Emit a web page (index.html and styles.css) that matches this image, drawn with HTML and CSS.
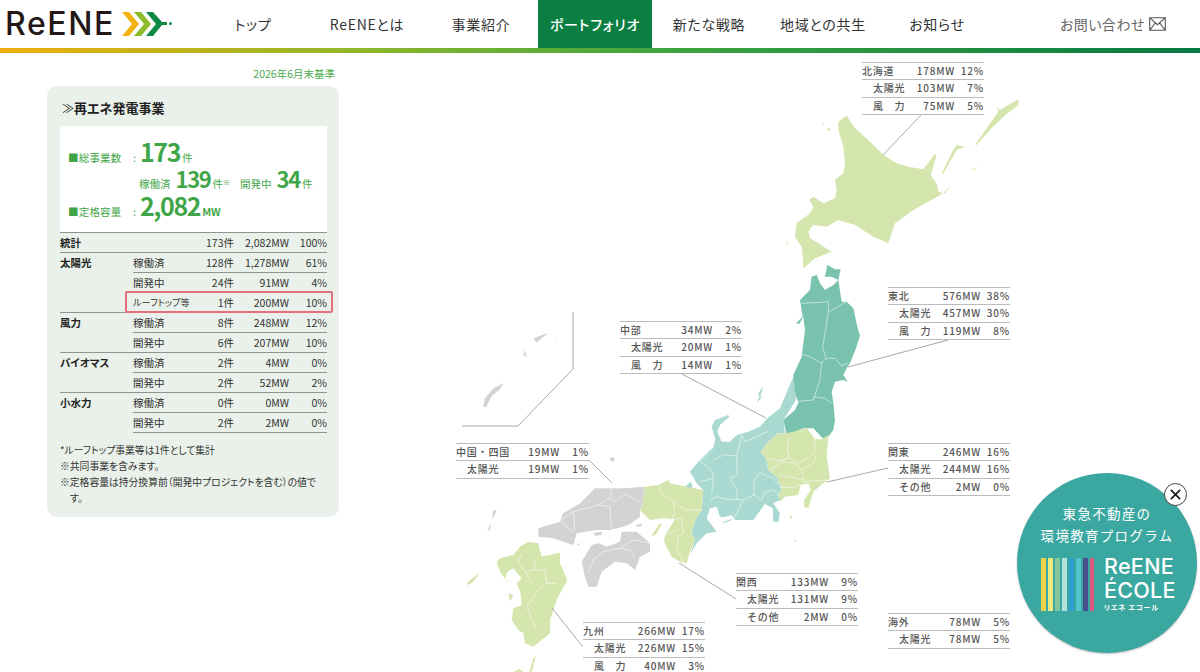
FILE: index.html
```html
<!DOCTYPE html>
<html lang="ja">
<head>
    <meta charset="UTF-8">
    <meta name="viewport" content="width=device-width, initial-scale=1.0">
    <title>ポートフォリオ | ReENE</title>
    <link rel="stylesheet" href="styles.css">
</head>
<body>
    <header class="site-header">
        <a class="logo" href="#">
            <span class="logo-text">ReENE</span>
            <svg class="logo-arrows" viewBox="0 0 50 26" width="50" height="26" aria-hidden="true">
                <path d="M0 1h7l10 12L7 25H0l10-12z" fill="#f0b310"/>
                <path d="M12 1h7l10 12-10 12h-7l10-12z" fill="#8dbb2c"/>
                <path d="M24 1h7l9 10h5v3h-5l-9 11h-7l10-12z" fill="#0f8a45"/>
                <circle cx="48.500" cy="12.500" r="1.500" fill="#0f8a45"/>
            </svg>
        </a>
        <nav class="main-nav">
            <a href="#">トップ</a>
            <a href="#">ReENEとは</a>
            <a href="#">事業紹介</a>
            <a href="#" class="active">ポートフォリオ</a>
            <a href="#">新たな戦略</a>
            <a href="#">地域との共生</a>
            <a href="#">お知らせ</a>
        </nav>
        <a class="contact" href="#">
            お問い合わせ
            <svg viewBox="0 0 17 14" width="17" height="14" aria-hidden="true">
                <path d="M.7.7h15.600v12.600H.7zM.7.7l7.800 7 7.800-7M.7 13.300l5.500-7.300M16.300 13.300l-5.500-7.300" fill="none" stroke="#555" stroke-width="1.100"/>
            </svg>
        </a>
    </header>
    <div class="header-bar"></div>

    <main class="content">
        <section class="summary">
            <p class="as-of">2026年6月末基準</p>
            <div class="panel">
                <h2 class="panel-title"><span class="panel-mark">≫</span>再エネ発電事業</h2>
                <div class="totals">
                    <div class="totals-row totals-first">
                        <span class="totals-label">■総事業数</span><span class="colon">:</span>
                        <b class="num-l">173</b><span class="unit">件</span>
                    </div>
                    <div class="totals-row totals-sub">
                        <span>稼働済</span><b class="num-m">139</b><span class="unit">件<small>※</small></span>
                        <span class="totals-gap">開発中</span><b class="num-m">34</b><span class="unit">件</span>
                    </div>
                    <div class="totals-row totals-last">
                        <span class="totals-label">■定格容量</span><span class="colon">:</span>
                        <b class="num-xl">2,082</b><span class="unit unit-mw">MW</span>
                    </div>
                </div>
                <div class="table-wrap">
                    <table class="stats">
                        <colgroup>
                            <col class="col-type"><col class="col-state"><col class="col-count"><col class="col-mw"><col class="col-pct">
                        </colgroup>
                        <tr><th>統計</th><td></td><td class="r">173件</td><td class="r">2,082MW</td><td class="r">100%</td></tr>
                        <tr><th rowspan="3">太陽光</th><td>稼働済</td><td class="r">128件</td><td class="r">1,278MW</td><td class="r">61%</td></tr>
                        <tr><td>開発中</td><td class="r">24件</td><td class="r">91MW</td><td class="r">4%</td></tr>
                        <tr><td class="narrow">ルーフトップ等</td><td class="r">1件</td><td class="r">200MW</td><td class="r">10%</td></tr>
                        <tr><th rowspan="2">風力</th><td>稼働済</td><td class="r">8件</td><td class="r">248MW</td><td class="r">12%</td></tr>
                        <tr><td>開発中</td><td class="r">6件</td><td class="r">207MW</td><td class="r">10%</td></tr>
                        <tr><th rowspan="2">バイオマス</th><td>稼働済</td><td class="r">2件</td><td class="r">4MW</td><td class="r">0%</td></tr>
                        <tr><td>開発中</td><td class="r">2件</td><td class="r">52MW</td><td class="r">2%</td></tr>
                        <tr><th rowspan="2">小水力</th><td>稼働済</td><td class="r">0件</td><td class="r">0MW</td><td class="r">0%</td></tr>
                        <tr><td>開発中</td><td class="r">2件</td><td class="r">2MW</td><td class="r">0%</td></tr>
                    </table>
                    <div class="rooftop-mark"></div>
                </div>
                <ul class="notes">
                    <li class="flat">*ルーフトップ事業等は1件として集計</li>
                    <li>※共同事業を含みます。</li>
                    <li>※定格容量は持分換算前（開発中プロジェクトを含む）の値です。</li>
                </ul>
            </div>
        </section>

        <div class="map">
            <svg class="japan" viewBox="440 53 600 619" width="600" height="619" aria-hidden="true">
                <!-- Hokkaido -->
                <g transform="translate(780 50) scale(.3333)" class="land-kansai">
                    <path d="M175 215L200 197 225 235 265 270 310 315 350 340 385 350 430 358 465 312 470 315 452 375 470 400 475 425 490 430 445 455 400 480 345 520 325 580 280 560 225 525 175 510 140 530 100 525 85 545 90 565 115 580 155 605 130 615 105 625 70 655 68 620 65 590 45 560 50 520 90 490 100 470 88 450 100 440 130 460 165 445 170 420 165 390 190 370 195 340 190 290 175 240z"/>
                    <path d="M585 285L620 235 655 185 650 170 660 180 715 148 715 165 670 200 630 240 590 285zM485 370L520 300 530 285 555 290 530 300 490 370zM575 360L595 350 580 362zM490 428L510 410 495 430zM127 210L132 225 129 225zM140 232L152 240 145 243zM18 582L24 570 22 585z"/>
                </g>
                <!-- Chubu -->
                <g transform="translate(680 400) scale(.3333)" class="land-chubu">
                    <path d="M340-70L360-50 355-30 345 5 310 60 315 100 295 100 265 125 242 155 258 175 265 210 290 230 305 265 295 285 300 300 280 310 300 340 295 365 280 365 278 325 255 312 220 360 165 360 155 345 130 352 120 350 110 320 90 325 80 355 110 395 80 400 50 430 30 465 45 420 35 400 45 360 65 330 70 270 50 250 30 215 55 185 100 140 105 115 95 80 105 60 145 45 148 50 120 75 112 95 125 125 150 125 170 105 205 95 240 80 262 55 300 25z"/>
                    <path d="M235-20L250-42 240-5 252-15 230 10 238-8z"/>
                    <path d="M130 365L158 356 155 360 130 370z"/>
                    <path d="M32 245L38 260 0 284 0 274z"/>
                </g>
                <g transform="translate(680 400) scale(.3333)" class="borders">
                    <path d="M105 115L100 145 60 185 95 210 100 235 60 245M100 180L130 165 170 168 178 135 185 105 195 125 240 105 262 95M170 168L172 225 150 235 170 270 172 298 140 298 110 290 90 300M100 235L95 285M172 298L190 300 160 360M190 300L222 285 222 240 240 218 280 235 305 265M222 285L245 300 255 275 280 270 298 290"/>
                </g>
                <!-- Tohoku -->
                <g transform="translate(700 260) scale(.3333)" class="land-tohoku">
                    <path d="M375 50L382 15 405 28 422 28 415 60 425 125 440 125 460 145 472 200 480 228 468 265 450 310 440 325 430 345 443 365 430 360 405 365 395 395 400 430 405 480 400 510 385 530 368 535 340 505 310 505 260 525 250 480 285 450 295 430 285 395 280 345 305 290 315 210 310 170 298 192 288 190 308 170 300 120 315 105 330 90 335 50 350 45 360 70 375 90 400 75 415 60 395 50z"/>
                </g>
                <g transform="translate(700 260) scale(.3333)" class="borders">
                    <path d="M305 130L345 128 385 125 385 155 375 220 368 260 378 295 365 310M385 155L415 140 440 125M378 295L405 295 425 318 445 308M305 282L330 290 365 310 360 360 345 405 340 420 285 425M340 410L375 415 395 430"/>
                </g>
                <!-- Kanto -->
                <g transform="translate(680 400) scale(.3333)" class="land-kansai">
                    <path d="M315 100L340 95 380 83 405 118 425 118 445 105 440 170 450 235 430 250 400 275 385 325 372 320 372 300 392 270 385 250 362 255 355 285 315 290 300 305 295 285 305 265 290 230 265 210 258 175 242 155 265 125 295 100z"/>
                </g>
                <g transform="translate(680 400) scale(.3333)" class="borders">
                    <path d="M325 115L322 145 328 175 355 190 402 160 405 118M258 175L300 182 328 175M270 212L305 185 345 190 365 210 372 240 300 225M365 210L400 190 410 160M365 245L440 240M300 262L340 262 362 255"/>
                </g>
                <!-- Kansai, Kyushu -->
                <g transform="translate(450 300) scale(.3333)" class="land-kansai">
                    <path d="M570 630L600 660 640 655 675 658 668 670 645 705 642 725 665 770 690 785 710 790 720 755 735 720 725 700 735 660 755 630 760 570 710 560 660 550 655 540 625 555 585 560 575 620z"/>
                    <path d="M605 705L630 670 635 675 620 700 610 708z"/>
                    <path d="M210 740L235 725 265 730 275 770 330 758 330 790 352 840 320 900 300 960 300 1000 250 1040 225 1030 220 1000 205 990 185 960 190 925 215 915 212 880 200 850 215 835 190 805 172 815 165 840 175 850 150 815 140 785 150 775 190 765z"/>
                    <path d="M50 850L62 838 90 818 70 845 55 855zM175 880L190 885 180 905zM250 1075L258 1068 245 1116 238 1116zM190 1116L208 1106 220 1116z"/>
                </g>
                <g transform="translate(450 300) scale(.3333)" class="borders">
                    <path d="M625 555L635 580 670 605 705 630 755 630M670 605L675 635 665 660 695 655 700 700 685 710 680 750 700 785M645 705L680 690"/>
                    <path d="M215 760L205 785 225 815 255 810 285 810 290 850 265 870M255 775L255 810M290 850L320 850M265 870L230 920 260 990M225 815L245 850"/>
                </g>
                <!-- Chugoku, Shikoku, Okinawa, islands -->
                <g transform="translate(450 300) scale(.3333)" class="land-gray">
                    <path d="M265 685L330 665 340 640 390 610 435 565 490 565 520 565 585 560 575 620 570 630 570 650 545 670 520 680 480 690 440 690 380 700 370 735 310 715 265 710z"/>
                    <path d="M395 785L425 735 445 730 470 740 510 725 515 695 560 695 600 730 600 755 570 770 555 810 530 790 495 785 455 815 440 860 415 860 405 830z"/>
                    <path d="M558 675L575 670 575 678 560 680zM430 700L455 695 455 705 435 707zM380 732L388 730 388 738z"/>
                    <path d="M100 320L105 295 122 275 130 265 160 250 150 268 125 288 108 322zM220 165L225 150 230 170zM250 115L295 98 275 115 260 128zM315 115L320 118 317 120zM130 630L140 632 125 660zM112 692L122 670 120 690z"/>
                    <circle cx="487" cy="478" r="7"/>
                </g>
                <g transform="translate(450 300) scale(.3333)" class="borders">
                    <path d="M485 565L480 595 445 615 370 635 340 655 335 670 370 695M370 635L375 695M445 615L480 620 485 690M480 595L495 605 525 582 570 605"/>
                    <path d="M415 815L430 780 460 755 510 745 550 720 600 730M510 745L540 750 555 775"/>
                </g>
                <!-- small islands south of Kanto -->
                <g class="land-kansai">
                    <circle cx="791" cy="517" r="1.200"/><circle cx="795" cy="541" r="1"/>
                </g>
                <!-- leader lines -->
                <path class="leaders" d="M923 113L883 155M948 340L848 367M888 468L827 482M680 373L766 418M589 460L612 483M583 647L552 608M736 599L679 563M573 312V369L518 426H462"/>
            </svg>

            <div class="area area-hokkaido">
                <div class="area-row"><span>北海道</span><span>178MW</span><span>12%</span></div>
                <div class="area-row sub"><span>太陽光</span><span>103MW</span><span>7%</span></div>
                <div class="area-row sub"><span>風　力</span><span>75MW</span><span>5%</span></div>
            </div>
            <div class="area area-tohoku">
                <div class="area-row"><span>東北</span><span>576MW</span><span>38%</span></div>
                <div class="area-row sub"><span>太陽光</span><span>457MW</span><span>30%</span></div>
                <div class="area-row sub"><span>風　力</span><span>119MW</span><span>8%</span></div>
            </div>
            <div class="area area-chubu">
                <div class="area-row"><span>中部</span><span>34MW</span><span>2%</span></div>
                <div class="area-row sub"><span>太陽光</span><span>20MW</span><span>1%</span></div>
                <div class="area-row sub"><span>風　力</span><span>14MW</span><span>1%</span></div>
            </div>
            <div class="area area-chugoku">
                <div class="area-row"><span>中国・四国</span><span>19MW</span><span>1%</span></div>
                <div class="area-row sub"><span>太陽光</span><span>19MW</span><span>1%</span></div>
            </div>
            <div class="area area-kanto">
                <div class="area-row"><span>関東</span><span>246MW</span><span>16%</span></div>
                <div class="area-row sub"><span>太陽光</span><span>244MW</span><span>16%</span></div>
                <div class="area-row sub"><span>その他</span><span>2MW</span><span>0%</span></div>
            </div>
            <div class="area area-kansai">
                <div class="area-row"><span>関西</span><span>133MW</span><span>9%</span></div>
                <div class="area-row sub"><span>太陽光</span><span>131MW</span><span>9%</span></div>
                <div class="area-row sub"><span>その他</span><span>2MW</span><span>0%</span></div>
            </div>
            <div class="area area-kyushu">
                <div class="area-row"><span>九州</span><span>266MW</span><span>17%</span></div>
                <div class="area-row sub"><span>太陽光</span><span>226MW</span><span>15%</span></div>
                <div class="area-row sub"><span>風　力</span><span>40MW</span><span>3%</span></div>
            </div>
            <div class="area area-overseas">
                <div class="area-row"><span>海外</span><span>78MW</span><span>5%</span></div>
                <div class="area-row sub"><span>太陽光</span><span>78MW</span><span>5%</span></div>
            </div>
        </div>
    </main>

    <aside class="promo">
        <p class="promo-title">東急不動産の<br>環境教育プログラム</p>
        <div class="promo-brand">
            <div class="stripes">
                <i class="s1"></i><i class="s2"></i><i class="s3"></i><i class="s4"></i><i class="s5"></i><i class="s6"></i><i class="s7"></i><i class="s8"></i>
            </div>
            <div class="promo-name">
                <span>ReENE</span>
                <span>ÉCOLE</span>
                <small>リエネ エコール</small>
            </div>
        </div>
        <button class="promo-close" aria-label="閉じる">
            <svg viewBox="0 0 14 14" width="13" height="13" aria-hidden="true">
                <path d="M2 2l10 10M12 2L2 12" stroke="#222" stroke-width="2" fill="none"/>
            </svg>
        </button>
    </aside>
</body>
</html>
```

FILE: styles.css
```css
html, body {
    height: 672px;
}

body {
    margin: 0;
    overflow: hidden;
    position: relative;
    background: #fff;
    color: #333;
    font-family: "Noto Sans CJK JP", "Noto Sans", sans-serif;
    font-feature-settings: "palt";
}

a {
    color: inherit;
    text-decoration: none;
}

/* header */
.site-header {
    display: flex;
    align-items: stretch;
    height: 48px;
}

.logo {
    display: flex;
    align-items: center;
    width: 196px;
    padding-left: 5px;
    box-sizing: border-box;
}

.logo-text {
    font-family: Inter, "Noto Sans", sans-serif;
    font-size: 32px;
    font-weight: 500;
    line-height: 1;
    letter-spacing: 1.600px;
    color: #231815;
}

.logo-arrows {
    margin-left: 7px;
    flex: none;
}

.main-nav {
    display: flex;
}

.main-nav a {
    width: 114px;
    display: flex;
    align-items: center;
    justify-content: center;
    padding-bottom: 1px;
    box-sizing: border-box;
    font-size: 14px;
    letter-spacing: .7px;
    color: #333;
}

.main-nav a.active {
    background: #0b7f42;
    color: #fff;
    font-weight: 500;
}

.contact {
    display: flex;
    align-items: center;
    gap: 4px;
    margin-left: 66px;
    font-size: 14px;
    letter-spacing: .4px;
    color: #666;
}

.header-bar {
    height: 5px;
    background: linear-gradient(90deg, #eeae0b 0%, #8fb72b 30%, #3fa53f 55%, #077a42 100%);
}

/* left panel */
.content {
    position: relative;
    height: 619px;
}

.summary {
    width: 292px;
    margin-left: 47px;
    padding-top: 14px;
}

.as-of {
    margin: 0 4px 5px 0;
    text-align: right;
    font-size: 10.500px;
    line-height: 14px;
    color: #4bab50;
}

.panel {
    background: #e9f1ea;
    border-radius: 10px;
    padding: 0 12px 12px 13px;
    height: 431px;
    box-sizing: border-box;
}

.panel-title {
    margin: 0;
    height: 40px;
    display: flex;
    align-items: center;
    font-size: 13px;
    font-weight: 700;
    color: #222;
    padding-top: 2px;
    box-sizing: border-box;
}

.panel-mark {
    font-weight: 400;
    font-size: 12px;
    margin-left: 2px;
}

.totals {
    background: #fff;
    height: 106px;
    padding: 13px 0 0 8px;
    box-sizing: border-box;
    color: #3fa648;
    font-size: 10.500px;
    line-height: 1;
}

.totals-row {
    display: flex;
    align-items: baseline;
}

.totals-first {
    height: 28px;
}

.totals-sub {
    height: 26px;
    padding-left: 71px;
}

.totals-last {
    height: 30px;
}

.totals-label {
    width: 65px;
    letter-spacing: .2px;
}

.colon {
    width: 7px;
}

.totals b {
    font-weight: 700;
}

.num-l {
    font-size: 25px;
    letter-spacing: -1.400px;
}

.num-m {
    font-size: 22px;
    margin-left: 5px;
    letter-spacing: -1.300px;
}

.num-xl {
    font-size: 25px;
    letter-spacing: -1.400px;
}

.unit {
    margin-left: 2px;
}

.unit small {
    font-size: 7px;
    vertical-align: 3px;
}

.unit-mw {
    font-weight: 700;
}

.totals-gap {
    margin-left: 10px;
}

.table-wrap {
    position: relative;
}

.stats {
    width: 267px;
    table-layout: fixed;
    border-collapse: collapse;
    font-size: 10.500px;
    color: #333;
}

.col-type { width: 73px; }
.col-state { width: 68px; }
.col-count { width: 33px; }
.col-mw { width: 55px; }
.col-pct { width: 38px; }

.stats tr {
    height: 20px;
}

.stats th,
.stats td {
    box-sizing: border-box;
    height: 20px;
    padding: 0;
    line-height: 19px;
    border-top: 1px solid #8e948f;
    white-space: nowrap;
    font-weight: 400;
}

.stats th {
    text-align: left;
    vertical-align: top;
    font-weight: 700;
    color: #222;
}

.stats tr:last-child td {
    border-bottom: 1px solid #8e948f;
}

.stats .r {
    text-align: right;
}

.stats .narrow {
    font-size: 9.200px;
}

.rooftop-mark {
    position: absolute;
    left: 65px;
    top: 59px;
    width: 204px;
    height: 18px;
    border: 2px solid #e4707c;
    border-radius: 2px;
}

.notes {
    list-style: none;
    margin: 9px 0 0;
    padding: 0;
    font-size: 9.800px;
    line-height: 16px;
    color: #333;
}

.notes li {
    padding-left: 10px;
    text-indent: -10px;
    width: 258px;
}

.notes .flat {
    padding-left: 0;
    text-indent: 0;
}

/* map */
.map {
    position: absolute;
    left: 440px;
    top: 0;
    width: 600px;
    height: 619px;
}

.japan {
    position: absolute;
    left: 0;
    top: 0;
}

.land-kansai { fill: #d5e5ae; }
.land-chubu { fill: #a9d9d0; }
.land-tohoku { fill: #78c2ae; }
.land-gray { fill: #d3d3d3; }

.borders {
    fill: none;
    stroke: #fff;
    stroke-width: 2;
    stroke-opacity: .8;
}

.leaders {
    fill: none;
    stroke: #a9a9a9;
    stroke-width: 1;
}

.area {
    position: absolute;
    width: 122px;
    background: #fff;
    border-top: 1px solid #bbb;
    font-size: 10px;
    font-weight: 500;
    letter-spacing: .8px;
    color: #555;
    font-feature-settings: normal;
}

.area-row {
    display: grid;
    grid-template-columns: 1fr auto 29px;
    height: 17.400px;
    line-height: 16px;
    border-bottom: 1px solid #bbb;
    box-sizing: border-box;
    white-space: nowrap;
}

.area-row span:nth-child(n+2) {
    text-align: right;
}

.area-row.sub {
    padding-left: 11px;
}

.area-hokkaido { left: 422px; top: 9px; }
.area-tohoku { left: 448px; top: 234px; }
.area-kanto { left: 448px; top: 390px; }
.area-chubu { left: 180px; top: 268px; }
.area-chugoku { left: 16px; top: 390px; width: 133px; }
.area-kyushu { left: 143px; top: 569px; }
.area-kansai { left: 296px; top: 520px; }
.area-overseas { left: 448px; top: 560px; }

/* promo circle */
.promo {
    position: absolute;
    left: 1017px;
    top: 473px;
    width: 180px;
    height: 180px;
    border-radius: 50%;
    background: #3aa7a1;
    color: #fff;
    text-align: center;
    box-shadow: 0 1px 2px rgba(0, 0, 0, .25);
}

.promo-title {
    margin: 29px 0 0;
    font-size: 13.500px;
    line-height: 22px;
    letter-spacing: 1.300px;
    font-feature-settings: normal;
}

.promo-brand {
    display: flex;
    gap: 10px;
    margin: 12px 0 0 24px;
}

.stripes {
    display: flex;
    gap: 2px;
    height: 53px;
}

.stripes i {
    display: block;
    width: 5px;
}

.stripes .s1 { background: #eed24a; }
.stripes .s2 { background: #eee77a; }
.stripes .s3 { background: #86c49a; }
.stripes .s4 { background: #b4e0de; }
.stripes .s5 { background: #2f9fd0; }
.stripes .s6 { background: #55c3cf; }
.stripes .s7 { background: #45528f; }
.stripes .s8 { background: #d9577f; width: 4px; }

.promo-name {
    display: flex;
    flex-direction: column;
    text-align: left;
    font-family: Inter, "Noto Sans", sans-serif;
    font-size: 21.500px;
    font-weight: 500;
    line-height: 24px;
    margin-top: -4px;
    letter-spacing: .3px;
}

.promo-name small {
    font-family: "Noto Sans CJK JP", sans-serif;
    font-size: 7px;
    font-weight: 700;
    line-height: 10px;
    letter-spacing: .8px;
}

.promo-close {
    position: absolute;
    right: 10px;
    top: 10px;
    width: 23px;
    height: 23px;
    padding: 0;
    display: flex;
    align-items: center;
    justify-content: center;
    border-radius: 50%;
    border: 1px solid #444;
    background: #fff;
}
```
